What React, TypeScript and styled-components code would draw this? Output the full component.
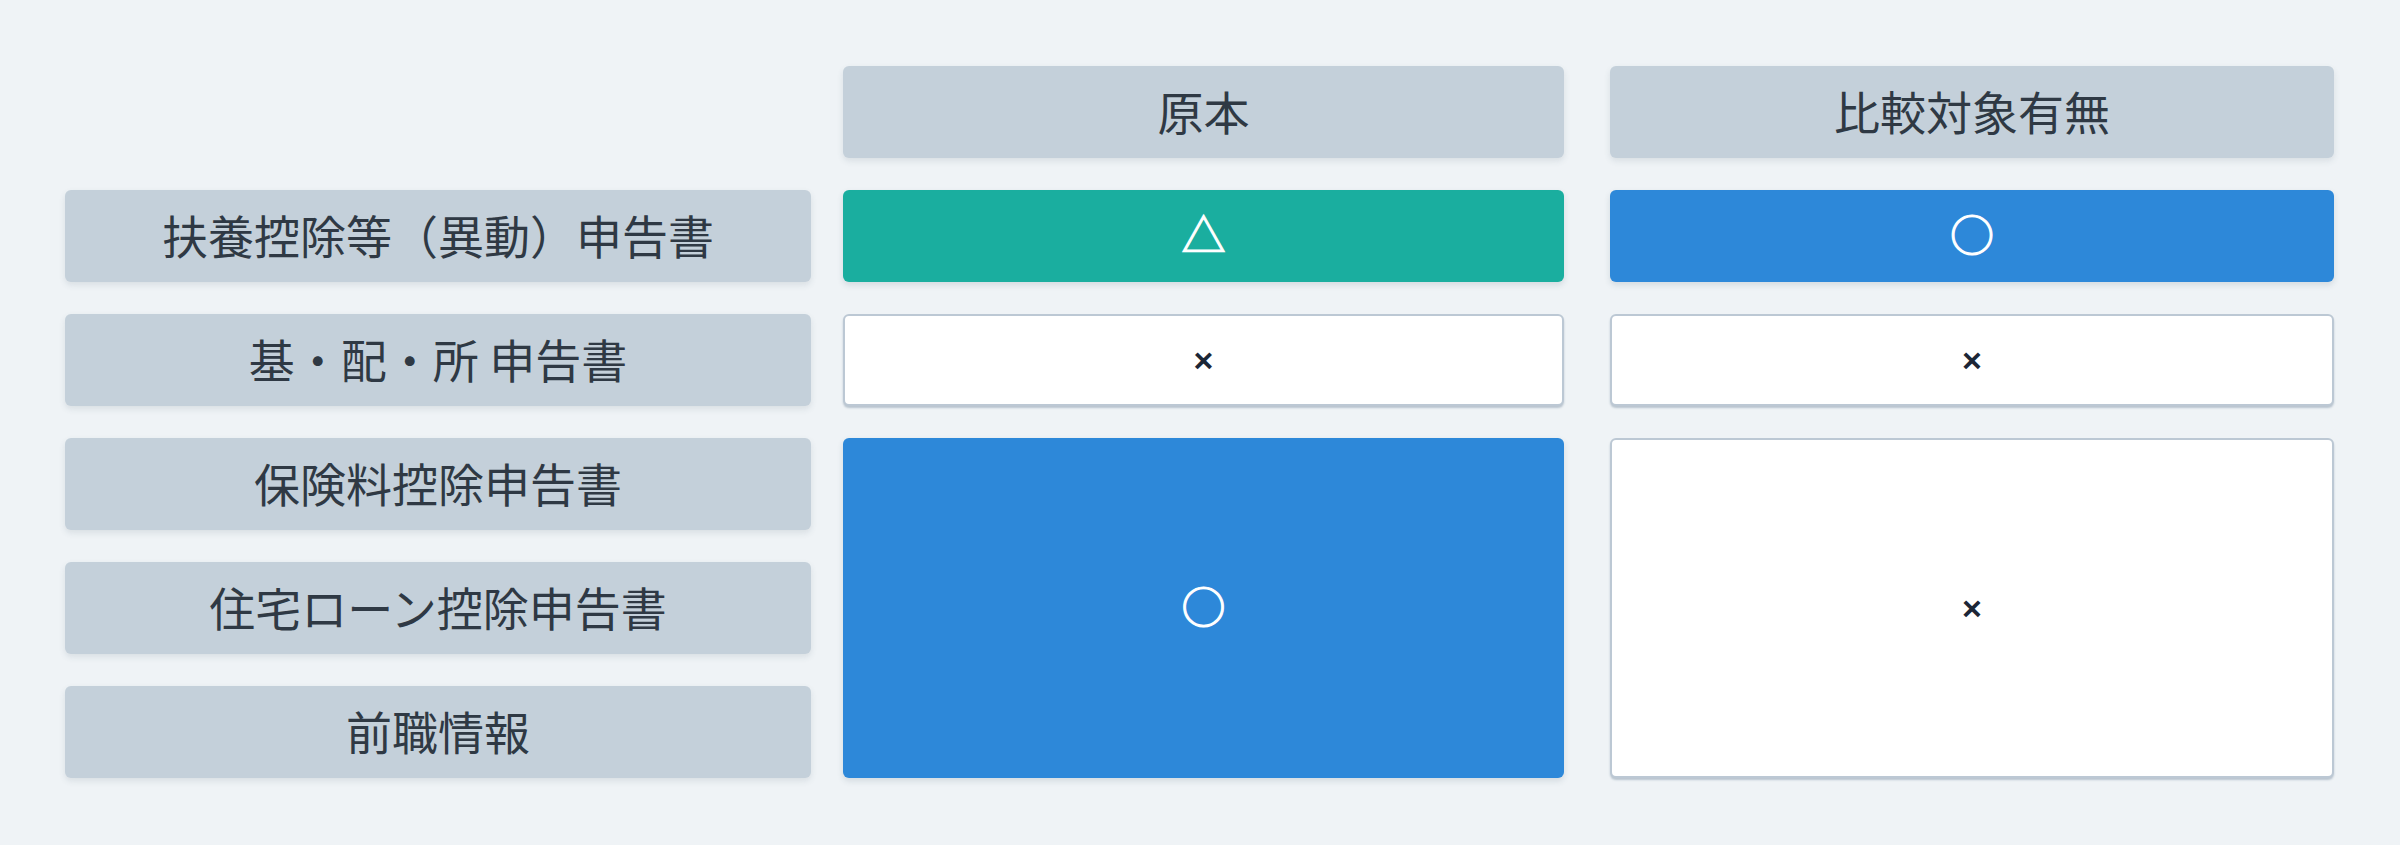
import React from "react";
import styled, { createGlobalStyle, css } from "styled-components";

const GlobalStyle = createGlobalStyle`
  html, body {
    margin: 0;
    padding: 0;
    background: #eff3f6;
  }
  body {
    font-family: "Noto Sans CJK JP", "Noto Sans", sans-serif;
    color: #2f3944;
  }
`;

const Page = styled.div`
  width: 2400px;
  height: 845px;
  box-sizing: border-box;
  padding: 66px 0 0 65px;
  background: #eff3f6;
`;

const Grid = styled.div`
  display: grid;
  grid-template-columns: 746px 32px 721px 46px 724px;
  grid-template-rows: repeat(6, 92px);
  row-gap: 32px;
  & > * {
    box-sizing: border-box;
  }
`;

const baseBox = css`
  display: flex;
  align-items: center;
  justify-content: center;
  border-radius: 6px;
`;

const HeaderCell = styled.div<{ $col: number }>`
  ${baseBox};
  grid-row: 1;
  grid-column: ${(p) => p.$col};
  background: #c4d0da;
  box-shadow: 0 3px 6px rgba(60, 80, 100, 0.12);
  font-size: 46px;
  color: #2f3944;
  padding-bottom: 4px;
`;

const LabelCell = styled.div<{ $row: number }>`
  ${baseBox};
  grid-column: 1;
  grid-row: ${(p) => p.$row};
  background: #c4d0da;
  box-shadow: 0 3px 6px rgba(60, 80, 100, 0.12);
  font-size: 46px;
  color: #2f3944;
  padding-bottom: 4px;
  white-space: nowrap;
`;

type Tone = "green" | "blue" | "white";

const toneStyles: Record<Tone, ReturnType<typeof css>> = {
  green: css`
    background: #1aae9f;
    box-shadow: 0 3px 6px rgba(40, 70, 90, 0.14);
  `,
  blue: css`
    background: #2d88d9;
    box-shadow: 0 3px 6px rgba(40, 70, 90, 0.14);
  `,
  white: css`
    background: #ffffff;
    border: 2px solid #bcc8d4;
    box-shadow: 0 2px 2px rgba(120, 140, 160, 0.45);
  `,
};

const ValueCell = styled.div<{ $col: number; $row: string; $tone: Tone }>`
  ${baseBox};
  grid-column: ${(p) => p.$col};
  grid-row: ${(p) => p.$row};
  ${(p) => toneStyles[p.$tone]};
`;

const Mark = styled.span`
  font-family: "Noto Sans CJK JP", sans-serif;
  font-size: 44px;
  line-height: 1;
  color: #ffffff;
  -webkit-text-stroke: 1.2px #ffffff;
  margin-bottom: 6px;
`;

const Cross = styled.span`
  font-family: "Liberation Sans", "DejaVu Sans", sans-serif;
  font-weight: 700;
  font-size: 34px;
  line-height: 1;
  color: #1c2636;
`;

const labels = [
  "扶養控除等（異動）申告書",
  "基・配・所 申告書",
  "保険料控除申告書",
  "住宅ローン控除申告書",
  "前職情報",
];

export default function App() {
  return (
    <>
      <GlobalStyle />
      <Page>
        <Grid>
          <HeaderCell $col={3}>原本</HeaderCell>
          <HeaderCell $col={5}>比較対象有無</HeaderCell>

          {labels.map((l, i) => (
            <LabelCell key={l} $row={i + 2}>
              {l}
            </LabelCell>
          ))}

          <ValueCell $col={3} $row="2" $tone="green">
            <Mark>△</Mark>
          </ValueCell>
          <ValueCell $col={5} $row="2" $tone="blue">
            <Mark>○</Mark>
          </ValueCell>

          <ValueCell $col={3} $row="3" $tone="white">
            <Cross>×</Cross>
          </ValueCell>
          <ValueCell $col={5} $row="3" $tone="white">
            <Cross>×</Cross>
          </ValueCell>

          <ValueCell $col={3} $row="4 / span 3" $tone="blue">
            <Mark>○</Mark>
          </ValueCell>
          <ValueCell $col={5} $row="4 / span 3" $tone="white">
            <Cross>×</Cross>
          </ValueCell>
        </Grid>
      </Page>
    </>
  );
}
